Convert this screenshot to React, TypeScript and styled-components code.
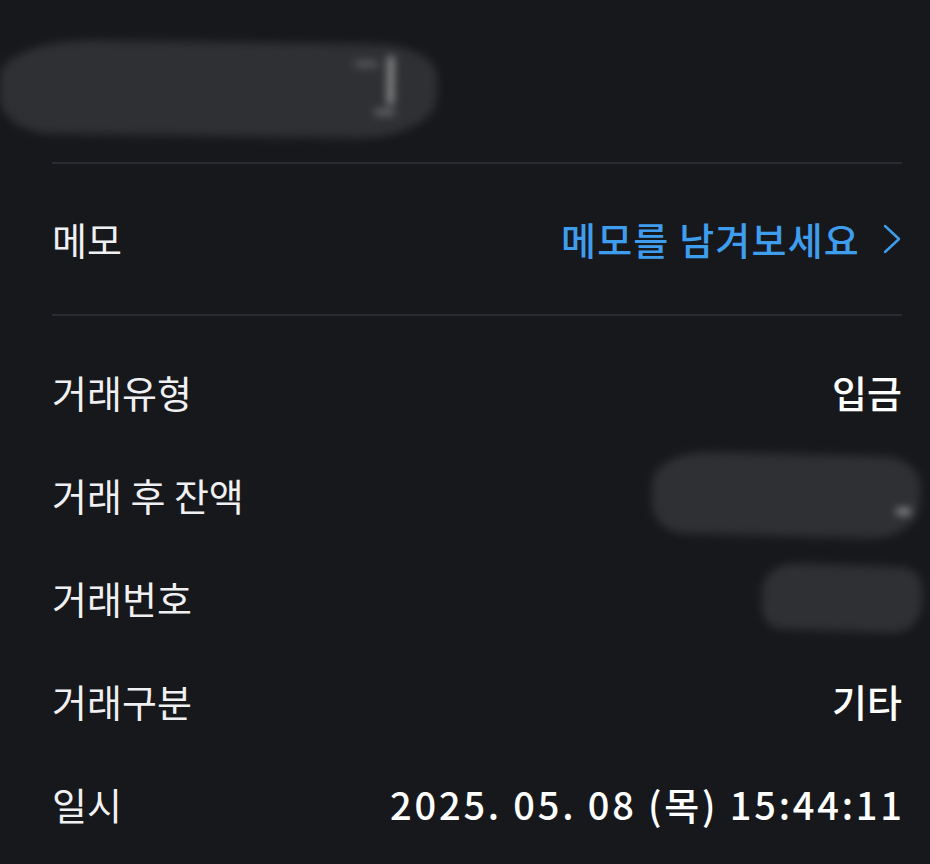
import React from "react";
import styled, { createGlobalStyle } from "styled-components";

const GlobalStyle = createGlobalStyle`
  html, body {
    margin: 0;
    padding: 0;
    background: #17181c;
  }
  body {
    font-family: "Noto Sans CJK KR", "Noto Sans", sans-serif;
    -webkit-font-smoothing: antialiased;
  }
`;

const Page = styled.div`
  width: 930px;
  min-height: 864px;
  box-sizing: border-box;
  padding: 0 28px 0 52px;
  background: #17181c;
  color: #f2f2f4;
  overflow: hidden;
`;

const Header = styled.div`
  height: 164px;
  box-sizing: border-box;
  padding-top: 42px;
  border-bottom: 2px solid #2a2c31;
  display: flex;
  align-items: flex-start;
`;

const HeaderAmount = styled.div`
  margin-left: -52px;
`;

const Smudge = styled.div<{ $w: number; $h: number; $tilt?: number }>`
  width: ${(p) => p.$w}px;
  height: ${(p) => p.$h}px;
  background: #2f3033;
  border-radius: 22% 14% 18% 12% / 40% 34% 45% 38%;
  filter: blur(4px);
  transform: rotate(${(p) => p.$tilt ?? 0}deg);
  position: relative;
`;

const Speck = styled.span`
  position: absolute;
  background: #d9d9d9;
  opacity: 0.75;
  filter: blur(0.6px);
`;

const MemoRow = styled.div`
  height: 150px;
  display: flex;
  align-items: center;
  justify-content: space-between;
  border-bottom: 2px solid #2a2c31;
`;

const List = styled.div`
  padding-top: 24px;
`;

const Row = styled.div`
  height: 103px;
  display: flex;
  align-items: center;
  justify-content: space-between;
`;

const Label = styled.span`
  font-size: 38px;
  line-height: 1;
  font-weight: 400;
  color: #f0f0f2;
`;

const Value = styled.span<{ $spaced?: boolean }>`
  font-size: 38px;
  line-height: 1;
  font-weight: 500;
  color: #ffffff;
  letter-spacing: ${(p) => (p.$spaced ? "2.8px" : "0")};
  margin-right: ${(p) => (p.$spaced ? "-2.8px" : "0")};
`;

const RedactedSlot = styled.div<{ $shift: number }>`
  margin-right: ${(p) => -p.$shift}px;
`;

const MemoLink = styled.span`
  display: flex;
  align-items: center;
  gap: 22px;
  font-size: 38px;
  line-height: 1;
  font-weight: 500;
  letter-spacing: 1.2px;
  color: #3f9ded;
`;

const Chevron = () => (
  <svg width="20" height="30" viewBox="0 0 20 30" fill="none">
    <path d="M3 2 L17 15 L3 28" stroke="#3f9ded" strokeWidth="2.4" strokeLinecap="round" strokeLinejoin="round" />
  </svg>
);

export default function App() {
  return (
    <>
      <GlobalStyle />
      <Page>
        <Header>
          <HeaderAmount>
            <Smudge $w={437} $h={94} $tilt={0.8}>
              <Speck style={{ left: 388, top: 12, width: 5, height: 48 }} />
              <Speck style={{ left: 355, top: 18, width: 22, height: 4, opacity: 0.4 }} />
              <Speck style={{ left: 375, top: 66, width: 20, height: 4, opacity: 0.5 }} />
            </Smudge>
          </HeaderAmount>
        </Header>
        <MemoRow>
          <Label>메모</Label>
          <MemoLink>
            메모를 남겨보세요
            <Chevron />
          </MemoLink>
        </MemoRow>
        <List>
          <Row>
            <Label>거래유형</Label>
            <Value>입금</Value>
          </Row>
          <Row>
            <Label>거래 후 잔액</Label>
            <RedactedSlot $shift={18}>
              <Smudge $w={268} $h={82} $tilt={1.5}>
                <Speck style={{ left: 245, top: 52, width: 14, height: 5 }} />
              </Smudge>
            </RedactedSlot>
          </Row>
          <Row>
            <Label>거래번호</Label>
            <RedactedSlot $shift={20}>
              <Smudge $w={160} $h={66} $tilt={2} />
            </RedactedSlot>
          </Row>
          <Row>
            <Label>거래구분</Label>
            <Value>기타</Value>
          </Row>
          <Row>
            <Label>일시</Label>
            <Value $spaced>2025. 05. 08 (목) 15:44:11</Value>
          </Row>
        </List>
      </Page>
    </>
  );
}
